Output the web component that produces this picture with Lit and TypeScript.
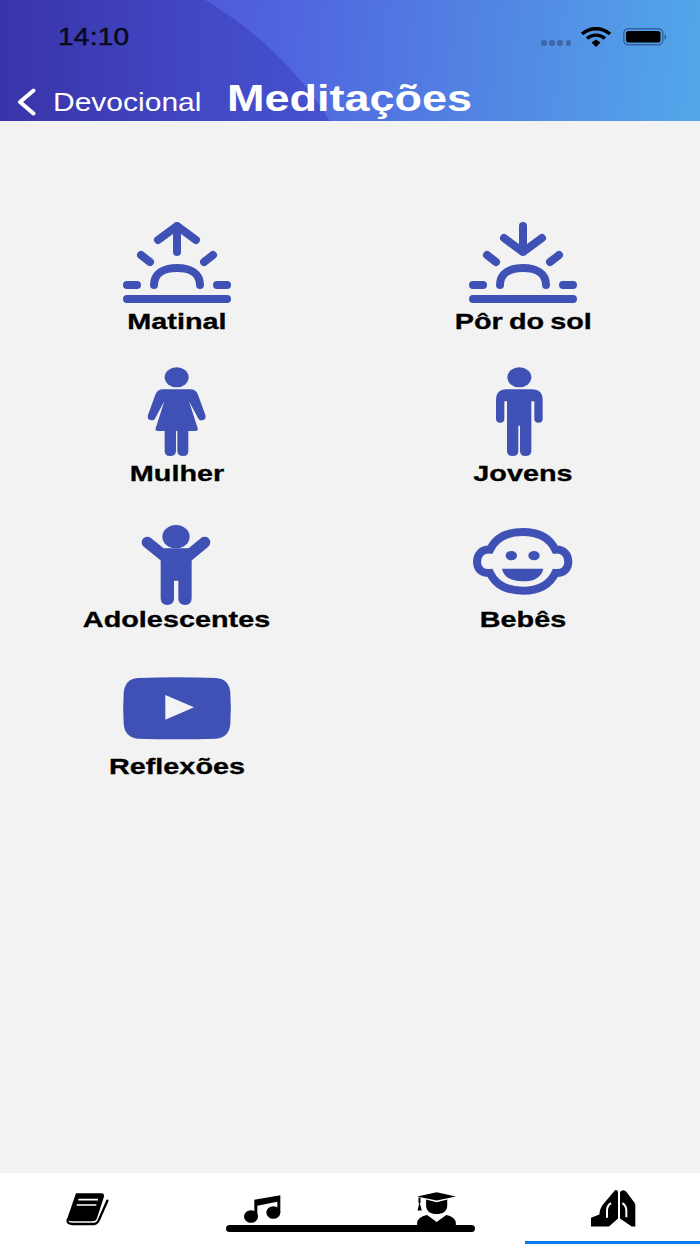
import { LitElement, html, css, svg } from "lit";
import { customElement } from "lit/decorators.js";

const sun = svg`<g fill="none" stroke="#3f51b5" stroke-width="8" stroke-linecap="round">
  <path d="M18 33L27 40M90 33L81 40M31 63C31 51 41 46 54 46C67 46 77 51 77 63M4 63H14M94 63H104M4 77H104"/></g>`;

const icons: Record<string, unknown> = {
  matinal: html`<svg width="120" height="86" viewBox="-6 0 120 86">${sun}
    <path d="M54 30V4M35 18L54 4L73 18" fill="none" stroke="#3f51b5" stroke-width="8" stroke-linecap="round" stroke-linejoin="round"/></svg>`,
  por: html`<svg width="120" height="86" viewBox="-6 0 120 86">${sun}
    <path d="M54 4V30M35 16L54 30L73 16" fill="none" stroke="#3f51b5" stroke-width="8" stroke-linecap="round" stroke-linejoin="round"/></svg>`,
  mulher: html`<svg width="120" height="92" viewBox="-9 24 360 276" fill="#3f51b5">
    <ellipse cx="170" cy="52" rx="36" ry="30"/>
    <path d="M130 88H210Q228 88 234 104L256 165Q260 180 246 181Q236 182 232 170L207 124L233 205Q236 213 225 213H205V272Q205 288 190 288Q172 288 172 272V213H168V272Q168 288 150 288Q134 288 134 272V213H115Q104 213 107 205L133 124L108 170Q104 182 94 181Q80 180 84 165L106 104Q112 88 130 88Z"/></svg>`,
  jovens: html`<svg width="120" height="92" viewBox="-6 24 360 276" fill="#3f51b5">
    <ellipse cx="163" cy="52" rx="36" ry="30"/>
    <path d="M125 88H201Q233 88 233 120V176Q233 188 221 188Q208 188 208 176V124H199V272Q199 288 181 288Q165 288 165 272V197H160V272Q160 288 144 288Q126 288 126 272V124H118V176Q118 188 105 188Q93 188 93 176V120Q93 88 125 88Z"/></svg>`,
  adol: html`<svg width="120" height="81" viewBox="-9 30 360 243" fill="#3f51b5">
    <ellipse cx="168" cy="65" rx="41" ry="35"/>
    <path d="M82 82L135 125M254 82L202 125" stroke="#3f51b5" stroke-width="34" stroke-linecap="round"/>
    <path d="M130 100H207L215 125V250Q215 270 195 270Q175 270 175 250V197H162V250Q162 270 142 270Q122 270 122 250V125Z"/></svg>`,
  bebes: html`<svg width="120" height="81" viewBox="9 30 360 243">
    <path d="M90 104C108 66 146 51 188 51C230 51 268 66 286 104C312 102 325 120 325 140C325 160 312 176 286 174C268 212 230 227 188 227C146 227 108 212 90 174C64 176 51 160 51 140C51 120 64 102 90 104Z" fill="none" stroke="#3f51b5" stroke-width="24"/>
    <g fill="#3f51b5"><ellipse cx="154" cy="122" rx="17" ry="14"/><ellipse cx="222" cy="122" rx="17" ry="14"/>
    <path d="M126 161H250Q242 199 188 199Q134 199 126 161Z"/></g></svg>`,
  refl: html`<svg width="120" height="76" viewBox="21 36 360 228">
    <path d="M84 39Q201 35 318 39Q358 41 361 85Q364 130 361 175Q358 219 318 221Q201 225 84 221Q44 219 41 175Q38 130 41 85Q44 41 84 39Z" fill="#3f51b5"/>
    <path d="M166 90L252 127L166 164Z" fill="#f4f4f6"/></svg>`,
};

const items = [
  ["matinal", "Matinal"], ["por", "Pôr do sol"],
  ["mulher", "Mulher"], ["jovens", "Jovens"],
  ["adol", "Adolescentes"], ["bebes", "Bebês"],
  ["refl", "Reflexões"],
];

@customElement("app-root")
export class AppRoot extends LitElement {
  static styles = css`
    :host { display: block; width: 700px; height: 1244px; position: relative; overflow: hidden; background: #f2f2f2; font-family: "Liberation Sans", Arial, sans-serif; }
    .page { display: flex; flex-direction: column; height: 1244px; }
    header { height: 121px; flex: none; position: relative; overflow: hidden; display: flex; flex-direction: column;
      background: linear-gradient(96deg, #4a50d0 0%, #4f5fde 35%, #5280e2 65%, #52a8ea 100%); }
    .shade { position: absolute; left: 0; top: 0; }
    .status { position: relative; height: 76px; flex: none; display: flex; align-items: center; padding: 0 33px 2px 58px; box-sizing: border-box; }
    .time { font-size: 24px; font-weight: 500; color: #0a0a1c; display: inline-block; transform: scaleX(1.17); transform-origin: left center; letter-spacing: .2px; -webkit-text-stroke: .5px #0a0a1c; }
    .right { margin-left: auto; display: flex; align-items: center; }
    .dots { display: flex; gap: 2.6px; margin: 12px 9px 0 0; }
    .dots i { width: 5.500px; height: 5.500px; border-radius: 50%; background: #3e66a8; display: block; }
    .battery { margin-left: 11px; }
    .nav { position: relative; display: flex; align-items: center; height: 45px; padding-left: 17px; color: #fff; }
    .chev { margin-top: 7px; }
    .back { font-size: 25px; width: 149px; margin-left: 17px; margin-top: 7px; white-space: nowrap; display: inline-block; transform: scaleX(1.2); transform-origin: left center; }
    .title { font-size: 36px; font-weight: 700; margin-left: 25px; margin-top: 1px; white-space: nowrap; display: inline-block; transform: scaleX(1.25); transform-origin: left center; }
    main { flex: 1; padding: 101px 4px 0; display: grid; grid-template-columns: 1fr 1fr; grid-template-rows: 146px 157px 152px 1fr; }
    .cell { display: flex; flex-direction: column; align-items: center; }
    .cell svg { display: block; flex: none; overflow: visible; }
    .label { font-size: 22px; font-weight: 700; line-height: 26px; margin-top: 1px; color: #000; white-space: nowrap; word-spacing: -1.5px; transform: scaleX(1.31); -webkit-text-stroke: .3px #000; }
    nav { height: 71px; flex: none; background: #fff; display: flex; }
    .tab { flex: 1; display: flex; align-items: center; justify-content: center; border-bottom: 3px solid transparent; padding-top: 3px; }
    .tab.active { border-bottom-color: #0a78f0; }
    .tab svg { display: block; }
    .home { position: absolute; left: 226px; top: 1225px; width: 249px; height: 7px; border-radius: 4px; background: #000; }
  `;

  render() {
    return html`<div class="page">
      <header>
        <svg class="shade" width="340" height="121" viewBox="0 0 340 121">
          <defs><linearGradient id="g" gradientUnits="userSpaceOnUse" x1="0" y1="0" x2="330" y2="0">
            <stop offset="0" stop-color="#3a33a8"/><stop offset=".6" stop-color="#4248c4"/><stop offset="1" stop-color="#4552d0"/></linearGradient></defs>
          <path d="M0 0H205C250 27 295 65 330 121H0Z" fill="url(#g)"/>
        </svg>
        <div class="status">
          <span class="time">14:10</span>
          <div class="right">
            <div class="dots"><i></i><i></i><i></i><i></i></div>
            <svg width="32" height="20" viewBox="0 0 32 20" fill="none" stroke="#000" stroke-width="3.400">
              <path d="M2 7C10 0 22 0 30 7M7 11.500C12 7 20 7 25 11.500"/><path d="M11.500 15.500L16 12.500L20.500 15.500L16 20Z" fill="#000" stroke="none"/></svg>
            <svg class="battery" width="44" height="18" viewBox="0 0 44 18">
              <rect x="0.8" y="0.8" width="39" height="16" rx="4.500" fill="none" stroke="#34609f" stroke-width="1.400"/>
              <rect x="3" y="3" width="34.500" height="11.500" rx="2.500" fill="#000"/>
              <rect x="41.500" y="6.500" width="1.500" height="5" rx=".7" fill="#34609f"/></svg>
          </div>
        </div>
        <div class="nav">
          <svg class="chev" width="19" height="28" viewBox="0 0 19 28" fill="none" stroke="#fff" stroke-width="4" stroke-linecap="round" stroke-linejoin="round"><path d="M16.500 2.500L3 14L16.500 25.500"/></svg>
          <span class="back">Devocional</span>
          <span class="title">Meditações</span>
        </div>
      </header>
      <main>
        ${items.map(([k, t]) => html`<div class="cell">${icons[k]}<span class="label">${t}</span></div>`)}
      </main>
      <nav>
        <div class="tab"><svg width="48" height="38" viewBox="70 62 144 112">
          <path d="M106 71H182Q193 71 189 84L168 148Q165 155 155 155H92Q80 155 80 146Z" fill="#000"/>
          <path d="M113 90H172M108 106H167" stroke="#fff" stroke-width="5"/>
          <path d="M81 150Q78 162 94 163H160Q170 163 175 150L200 93" fill="none" stroke="#000" stroke-width="7" stroke-linecap="round"/></svg></div>
        <div class="tab"><svg width="40" height="32" viewBox="610 70 120 95">
          <ellipse cx="634" cy="140" rx="21" ry="19"/><ellipse cx="701" cy="128" rx="21" ry="19"/>
          <path d="M644 140V90L722 76V128H713V96L653 108V140Z"/></svg></div>
        <div class="tab"><svg width="45" height="38" viewBox="72 55 135 115">
          <path d="M78 75L137 62L195 75L137 87ZM82 78H88V95H82Z"/><path d="M79 117L85 92L92 117Z"/>
          <path d="M105 84L137 92L169 84V102C169 120 155 128 137 128C119 128 105 120 105 102Z"/>
          <path d="M78 165V155C78 143 92 134 108 131L137 152L166 131C182 134 195 143 195 155V165Z"/></svg></div>
        <div class="tab active"><svg width="46" height="39" viewBox="15 12 138 116">
          <path d="M90 15Q98 13 99 22V100L72 124H18V98L43 88Q44 72 52 60Z"/>
          <path d="M112 16Q118 13 124 20L148 52Q151 56 151 62V124H140L105 100V22Q106 17 112 16Z"/>
          <path d="M66 98V76Q66 62 78 54M124 96V76Q124 62 112 54" fill="none" stroke="#fff" stroke-width="6"/></svg></div>
      </nav>
    </div><div class="home"></div>`;
  }
}
